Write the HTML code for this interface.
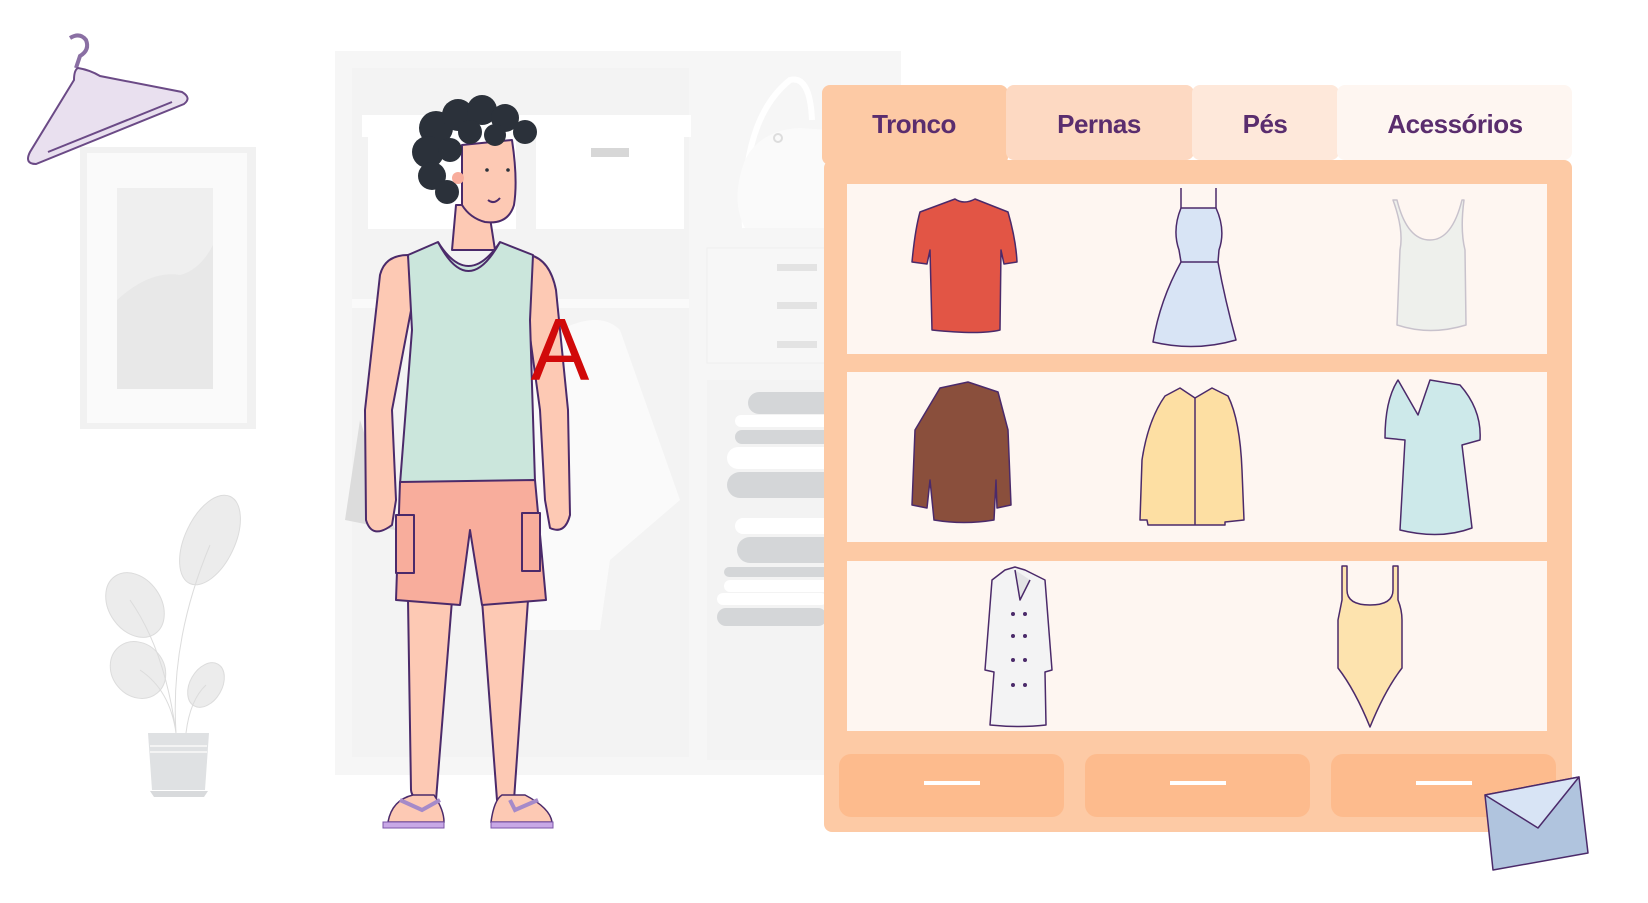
<!DOCTYPE html>
<html><head><meta charset="utf-8"><style>
html,body{margin:0;padding:0;background:#fff;width:1648px;height:903px;overflow:hidden}
svg{display:block}
.t{font-family:"Liberation Sans",sans-serif;font-weight:bold;font-size:26px;fill:#5a2d6e;text-anchor:middle;letter-spacing:-0.5px}
</style></head><body>
<svg width="1648" height="903" viewBox="0 0 1648 903" xmlns="http://www.w3.org/2000/svg">
<!-- frame -->
<rect x="80" y="147" width="176" height="282" fill="#f1f1f1"/>
<rect x="87" y="153" width="160" height="270" fill="#fafafa"/>
<rect x="117" y="188" width="96" height="201" fill="#efefef"/>
<path d="M117 300 Q150 270 180 275 Q200 270 213 245 L213 389 L117 389Z" fill="#e8e8e8"/>
<!-- hanger -->
<g stroke="#6b4a86" stroke-width="2" fill="#e9e0ef">
<path d="M76 68 L80 56 Q90 50 86 40 Q80 32 70 38" fill="none" stroke-width="4" stroke="#8a6fa3"/>
<path d="M78 68 Q90 70 100 76 L182 92 Q192 98 184 104 L36 164 Q24 164 30 152 L74 80 Q74 70 78 68Z"/>
<path d="M48 152 L172 102" fill="none"/>
</g>
<!-- plant -->
<g fill="#ececec" stroke="#dcdcdc">
<ellipse cx="210" cy="540" rx="25" ry="48" transform="rotate(25 210 540)"/>
<ellipse cx="135" cy="605" rx="26" ry="35" transform="rotate(-35 135 605)"/>
<ellipse cx="138" cy="670" rx="26" ry="30" transform="rotate(-40 138 670)"/>
<ellipse cx="206" cy="685" rx="16" ry="24" transform="rotate(30 206 685)"/>
<path d="M176 733 Q170 640 210 545 M176 733 Q165 650 130 600 M176 733 Q170 690 140 670 M186 733 Q190 700 206 685" fill="none"/>
</g>
<path d="M148 733 L209 733 L205 790 L152 790Z" fill="#dfe1e3"/>
<rect x="150" y="745" width="57" height="2" fill="#f3f3f3"/><rect x="150" y="751" width="57" height="2" fill="#f3f3f3"/>
<path d="M150 791 L208 791 L204 797 L154 797Z" fill="#d8dadc"/>
<!-- wardrobe -->
<rect x="335" y="51" width="566" height="724" fill="#f6f6f6"/>
<rect x="352" y="68" width="337" height="689" fill="#f3f3f3"/>
<rect x="362" y="115" width="329" height="22" fill="#fff"/>
<rect x="368" y="137" width="148" height="92" fill="#fff"/>
<rect x="536" y="137" width="148" height="92" fill="#fff"/>
<rect x="591" y="148" width="38" height="9" fill="#d7d7d7"/>
<rect x="352" y="299" width="337" height="9" fill="#fafafa"/>
<rect x="707" y="248" width="194" height="115" fill="#f7f7f7" stroke="#efefef"/>
<rect x="777" y="264" width="40" height="7" fill="#e3e3e3"/><rect x="777" y="302" width="40" height="7" fill="#e3e3e3"/><rect x="777" y="341" width="40" height="7" fill="#e3e3e3"/>
<rect x="707" y="380" width="194" height="380" fill="#f3f3f3"/>
<g fill="#d4d6d8"><rect x="748" y="392" width="100" height="22" rx="11"/><rect x="735" y="430" width="100" height="14" rx="7"/><rect x="727" y="472" width="110" height="26" rx="13"/><rect x="737" y="537" width="100" height="26" rx="13"/><rect x="724" y="567" width="110" height="10" rx="5"/><rect x="717" y="608" width="110" height="18" rx="9"/></g>
<g fill="#fff"><rect x="735" y="415" width="100" height="12" rx="6"/><rect x="727" y="447" width="110" height="22" rx="11"/><rect x="735" y="518" width="100" height="16" rx="8"/><rect x="724" y="580" width="110" height="12" rx="6"/><rect x="717" y="593" width="110" height="12" rx="6"/></g>
<!-- bag -->
<path d="M745 228 Q740 120 790 80 Q810 75 812 120" fill="none" stroke="#fff" stroke-width="6"/>
<path d="M745 160 Q760 130 800 128 L830 130 L830 228 L745 228 Q730 200 745 160Z" fill="#fafafa"/>
<circle cx="778" cy="138" r="4" fill="none" stroke="#ddd" stroke-width="2"/>
<!-- hanging shirt behind -->
<path d="M560 330 Q600 310 620 330 L680 500 L610 560 L600 630 L530 630 L520 400Z" fill="#fafafa"/>
<path d="M360 420 L345 520 L395 530Z" fill="#dcdcdc"/>
<!-- person -->
<g stroke="#4b2a6a" stroke-width="2" stroke-linejoin="round">
<path d="M408 600 L411 790 Q412 800 425 800 L436 800 L452 600Z" fill="#fdc9b4"/>
<path d="M482 600 L497 800 L514 800 L528 600Z" fill="#fdc9b4"/>
<path d="M408 255 Q385 255 380 275 L365 410 L366 520 Q372 540 392 525 L396 500 L392 410 L413 300Z" fill="#fdc9b4"/>
<path d="M530 255 Q550 260 556 290 L568 410 L570 515 Q565 535 550 528 L545 500 L540 410 L525 300Z" fill="#fdc9b4"/>
<path d="M456 205 L452 250 L495 250 L488 205Z" fill="#fdc9b4"/>
<path d="M408 255 L438 242 Q468 290 500 242 L533 255 L530 320 L535 482 L400 484 L412 330Z" fill="#cbe6dc"/>
<path d="M438 242 Q468 300 500 242" fill="none"/>
<path d="M400 482 L535 480 L546 600 L482 605 L470 530 L460 605 L396 600Z" fill="#f8ad9c"/>
<rect x="396" y="515" width="18" height="58" fill="#f8ad9c"/>
<rect x="522" y="513" width="18" height="58" fill="#f8ad9c"/>
<path d="M462 145 L512 140 Q518 180 514 205 Q508 225 485 222 Q470 218 462 205Z" fill="#fdc9b4"/>
</g>
<g fill="#2b313a">
<circle cx="436" cy="128" r="17"/><circle cx="458" cy="115" r="16"/><circle cx="482" cy="110" r="15"/><circle cx="505" cy="118" r="14"/><circle cx="525" cy="132" r="12"/>
<circle cx="428" cy="152" r="16"/><circle cx="432" cy="176" r="14"/><circle cx="447" cy="192" r="12"/><circle cx="470" cy="132" r="12"/><circle cx="495" cy="135" r="11"/><circle cx="450" cy="150" r="12"/>
</g>
<circle cx="458" cy="178" r="6" fill="#f8ad9c"/>
<circle cx="487" cy="170" r="1.8" fill="#2b313a"/><circle cx="508" cy="170" r="1.8" fill="#2b313a"/>
<path d="M488 200 Q494 205 500 198" stroke="#4b2a6a" stroke-width="2" fill="none"/>
<g fill="#fdc9b4" stroke="#4b2a6a" stroke-width="1.5">
<path d="M388 822 Q392 800 413 795 L434 795 Q444 810 444 822Z"/>
<path d="M491 822 Q494 800 502 795 L525 795 Q550 808 552 822Z"/>
</g>
<rect x="383" y="822" width="61" height="6" fill="#c8a8e6" stroke="#7b55a8"/>
<rect x="491" y="822" width="62" height="6" fill="#c8a8e6" stroke="#7b55a8"/>
<path d="M400 800 L422 810 L440 800 M510 800 L515 810 L538 800" stroke="#a58ac9" stroke-width="4" fill="none"/>
<text x="560" y="380" font-family="Liberation Sans,sans-serif" font-size="88" fill="#d10a0a" text-anchor="middle">A</text>

<!-- tabs -->
<rect x="822" y="85" width="186" height="80" rx="8" fill="#fdcaa5"/>
<rect x="1006" y="85" width="188" height="75" rx="8" fill="#fdd9c2"/>
<rect x="1192" y="85" width="147" height="75" rx="8" fill="#fee8da"/>
<rect x="1337" y="85" width="235" height="75" rx="8" fill="#fef6f1"/>
<text class="t" x="914" y="133">Tronco</text>
<text class="t" x="1099" y="133">Pernas</text>
<text class="t" x="1265" y="133">Pés</text>
<text class="t" x="1455" y="133">Acessórios</text>
<!-- panel -->
<rect x="824" y="160" width="748" height="672" rx="8" fill="#fdcaa5"/>
<rect x="847" y="184" width="700" height="170" fill="#fef6f1"/>
<rect x="847" y="372" width="700" height="170" fill="#fef6f1"/>
<rect x="847" y="561" width="700" height="170" fill="#fef6f1"/>
<g fill="#fdbb8d"><rect x="839" y="754" width="225" height="63" rx="12"/><rect x="1085" y="754" width="225" height="63" rx="12"/><rect x="1331" y="754" width="225" height="63" rx="12"/></g>
<g fill="#fff"><rect x="924" y="781" width="56" height="4"/><rect x="1170" y="781" width="56" height="4"/><rect x="1416" y="781" width="56" height="4"/></g>
<g stroke="#4b2a6a" stroke-width="1.5" stroke-linejoin="round">
<path d="M955 199 Q964 205 975 199 L1008 212 Q1016 240 1017 262 L1004 264 L1001 250 L1000 330 Q980 335 932 330 L930 250 L927 264 L912 262 Q915 230 920 212Z" fill="#e25545"/>
<path d="M1181 188 L1181 208 M1216 208 L1216 188" fill="none"/>
<path d="M1181 208 L1216 208 Q1226 230 1219 250 L1218 262 Q1225 300 1236 340 Q1195 352 1153 342 Q1160 300 1181 262 L1179 250 Q1172 230 1181 208Z" fill="#d8e4f5"/>
<path d="M1181 262 L1218 262" fill="none"/>
<path d="M1397 200 Q1407 240 1430 240 Q1452 240 1462 200 L1464 200 Q1460 230 1465 250 L1466 325 Q1430 336 1397 325 L1400 250 Q1404 230 1393 200Z" fill="#eef0ec" stroke="#c8c2cc"/>
<path d="M940 388 L968 382 L998 392 L1008 430 L1011 505 L997 508 L996 480 L994 520 Q964 525 934 520 L930 480 L927 508 L912 505 L915 430Z" fill="#8a4f3c"/>
<path d="M1165 396 L1180 388 L1195 398 L1212 388 L1228 396 Q1240 420 1242 470 L1244 520 L1225 522 L1225 525 L1148 525 L1147 520 L1140 520 L1142 460 Q1148 420 1165 396Z" fill="#fddfa3"/>
<path d="M1195 398 L1195 525" fill="none"/>
<path d="M1398 380 L1418 415 L1430 380 L1460 385 Q1482 410 1480 440 L1462 445 L1472 528 Q1440 540 1400 530 L1405 440 L1385 438 Q1385 400 1398 380Z" fill="#cde9ea"/>
<path d="M1005 570 L1015 567 L1025 570 L1045 580 L1052 670 L1045 672 L1046 725 Q1020 728 990 725 L994 672 L985 670 L992 580Z" fill="#f3f3f4"/>
<path d="M1015 570 L1020 600 L1030 580" fill="#e3e3e5"/>
<path d="M1347 566 L1347 590 Q1347 605 1370 605 Q1393 605 1393 590 L1393 566 L1398 566 L1398 600 Q1402 610 1402 620 L1402 668 Q1385 690 1370 727 Q1355 690 1338 668 L1338 620 Q1340 610 1342 600 L1342 566Z" fill="#fde3ae"/>
</g>
<g fill="#4b2a6a"><circle cx="1013" cy="614" r="2"/><circle cx="1025" cy="614" r="2"/><circle cx="1013" cy="636" r="2"/><circle cx="1025" cy="636" r="2"/><circle cx="1013" cy="660" r="2"/><circle cx="1025" cy="660" r="2"/><circle cx="1013" cy="685" r="2"/><circle cx="1025" cy="685" r="2"/></g>
<g stroke="#4b2a6a" stroke-width="1.5" stroke-linejoin="round">
<path d="M1485 795 L1579 777 L1588 853 L1493 870Z" fill="#b0c4de"/>
<path d="M1485 795 L1579 777 L1538 828Z" fill="#d8e4f5"/>
</g>
</svg>
</body></html>
